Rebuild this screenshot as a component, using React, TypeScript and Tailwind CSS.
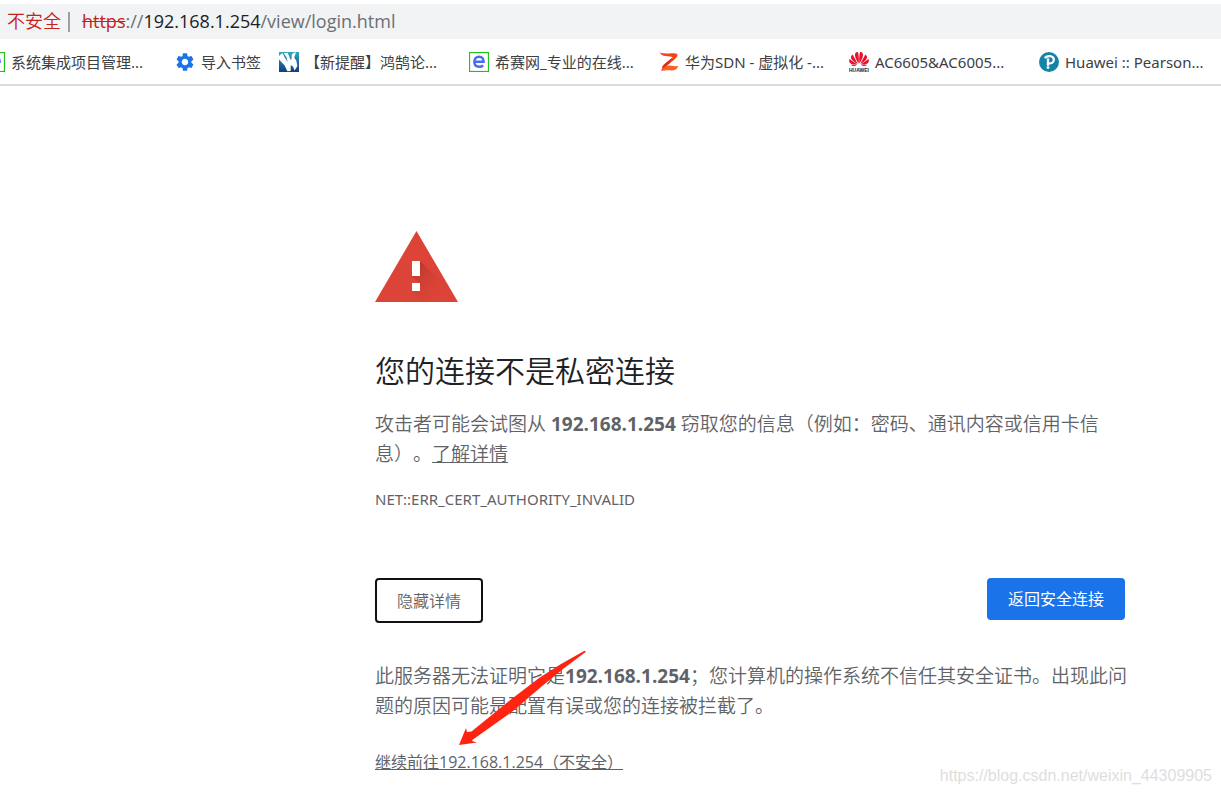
import type { ReactNode } from "react";

interface BookmarkProps {
  label: string;
  icon: ReactNode;
  short?: boolean;
}

function Bookmark({ label, icon, short }: BookmarkProps) {
  return (
    <li className={`shrink-0 ${short ? "w-[104px]" : "w-[190px]"}`}>
      <a href="#" className="flex items-center gap-[6px] text-[15px] leading-5 whitespace-nowrap text-[#3c4043]">
        {icon}
        {label}
      </a>
    </li>
  );
}

function EducityIcon() {
  return (
    <svg viewBox="0 0 20 20" className="size-5 shrink-0" aria-hidden="true">
      <rect x="0.5" y="0.5" width="19" height="19" fill="#fff" stroke="#1fc11f" strokeWidth="1.2" />
      <path d="M5.6 9.7H14.6C14.6 6.4 12.8 4.7 10.1 4.7C7.2 4.7 5.3 6.8 5.3 9.8C5.3 12.9 7.2 14.8 10.2 14.8C12 14.8 13.2 14.3 14.2 13.5" fill="none" stroke="#4a68f0" strokeWidth="2.4" />
    </svg>
  );
}

function GearIcon() {
  return (
    <svg viewBox="2 2 20 20" className="size-5 shrink-0 p-px" aria-hidden="true">
      <path
        fill="#1a73e8"
        d="M19.14 12.94c.04-.3.06-.61.06-.94 0-.32-.02-.64-.07-.94l2.03-1.58c.18-.14.23-.41.12-.61l-1.92-3.32c-.12-.22-.37-.29-.59-.22l-2.39.96c-.5-.38-1.03-.7-1.62-.94l-.36-2.54c-.04-.24-.24-.41-.48-.41h-3.84c-.24 0-.43.17-.47.41l-.36 2.54c-.59.24-1.13.57-1.62.94l-2.39-.96c-.22-.08-.47 0-.59.22L2.74 8.87c-.12.21-.08.47.12.61l2.03 1.58c-.05.3-.09.63-.09.94s.02.64.07.94l-2.03 1.58c-.18.14-.23.41-.12.61l1.92 3.32c.12.22.37.29.59.22l2.39-.96c.5.38 1.03.7 1.62.94l.36 2.54c.05.24.24.41.48.41h3.84c.24 0 .44-.17.47-.41l.36-2.54c.59-.24 1.13-.56 1.62-.94l2.39.96c.22.08.47 0 .59-.22l1.92-3.32c.12-.22.07-.47-.12-.61l-2.01-1.58zM12 15.6c-1.98 0-3.6-1.62-3.6-3.6s1.62-3.6 3.6-3.6 3.6 1.62 3.6 3.6-1.62 3.6-3.6 3.6z"
      />
    </svg>
  );
}

function SwanIcon() {
  return (
    <svg viewBox="0 0 20 20" className="size-5 shrink-0" aria-hidden="true">
      <defs>
        <linearGradient id="swan" x1="0" y1="0" x2="0" y2="1">
          <stop offset="0" stopColor="#35a9bd" />
          <stop offset="0.5" stopColor="#1c6fa0" />
          <stop offset="1" stopColor="#153c7c" />
        </linearGradient>
      </defs>
      <rect width="20" height="20" fill="url(#swan)" />
      <path d="M0 4L2.6 1.4L8.6 .8L12 8.6L11.6 19L8.4 19.2L5.6 13.4L0 7.4Z" fill="#fff" />
      <path d="M11 8.4L12.6 7V3.2C13.2 1.4 14.8 .2 17 .4L15.2 5.6L17.4 9L18.4 14L15.6 18.4L14 14.4L10.8 12.4Z" fill="#fff" />
      <path d="M3.6 .8L5.4 5L8.6 10L7.6 5.4L4.6 1Z" fill="#2a8bac" />
    </svg>
  );
}

function RibbonIcon() {
  return (
    <svg viewBox="0 0 20 20" className="size-5 shrink-0" aria-hidden="true">
      <path d="M.8 .6C4 1.8 9 1.4 13 1.2C17 1 19.2 1.6 18.2 4.2C17 7 12.6 9.4 8 13.4L3.4 16.6C2.6 14.8 4 12.8 6.5 11.2L14 5.2C10 3.8 2.6 5.4 .8 .6Z" fill="#f2431d" />
      <path d="M2.4 17.6C3.4 14 7.6 13.2 12 13.8C15 14.2 18 14.6 19.2 13.8C18.4 17.2 16 18.6 12.5 18.4C9 18.2 5 18.4 2.4 19Z" fill="#f9602a" />
      <path d="M14 5.2L6.5 11.2L4 14.2L3.6 16.4L10.6 11.2Z" fill="#e02a16" />
    </svg>
  );
}

function HuaweiIcon() {
  return (
    <svg viewBox="0 0 20 20" className="size-5 shrink-0" aria-hidden="true">
      <g fill="#e8112d" transform="scale(1 .88)">
        <path d="M9.7 13.2C7.2 9 5.4 4.6 6.2 1.6C6.8.5 7.8.1 9 0C9.8 3.4 10 8.4 9.7 13.2Z" />
        <path d="M10.3 13.2C12.8 9 14.6 4.6 13.8 1.6C13.2.5 12.2.1 11 0C10.2 3.4 10 8.4 10.3 13.2Z" />
        <path d="M8.8 13.4C5 11.6 1.6 8.4 2 5.4C2.2 4.2 3 3.4 3.8 2.8C5 6 7 9.8 8.8 13.4Z" />
        <path d="M11.2 13.4C15 11.6 18.4 8.4 18 5.4C17.8 4.2 17 3.4 16.2 2.8C15 6 13 9.8 11.2 13.4Z" />
        <path d="M8.2 14C4.8 14.6 1.6 14 .5 11.6C0 10.4 0 9 .5 8C2.8 10.2 5.6 12.2 8.2 14Z" />
        <path d="M11.8 14C15.2 14.6 18.4 14 19.5 11.6C20 10.4 20 9 19.5 8C17.2 10.2 14.4 12.2 11.8 14Z" />
        <path d="M8 14.6C6 16.4 3.4 16.4 1.8 14.6Z" />
        <path d="M12 14.6C14 16.4 16.6 16.4 18.2 14.6Z" />
      </g>
      <text x="10" y="20" textAnchor="middle" fontSize="5" fontWeight="700" fontFamily="Liberation Sans, sans-serif" fill="#222">
        HUAWEI
      </text>
    </svg>
  );
}

function PearsonIcon() {
  return (
    <svg viewBox="0 0 20 20" className="size-5 shrink-0" aria-hidden="true">
      <circle cx="10" cy="10" r="10" fill="#1583a6" />
      <path d="M5.6 6C7.4 4.4 9.4 3.9 11.2 4.2C13.6 4.6 15 6 14.8 8.1C14.5 10.6 12.2 11.9 9.4 11.4" fill="none" stroke="#fff" strokeWidth="2.2" />
      <path d="M9 6.4V13.8" stroke="#fff" strokeWidth="2.4" />
      <circle cx="9" cy="15.6" r="1.4" fill="#fff" />
    </svg>
  );
}

const bookmarks: BookmarkProps[] = [
  { label: "系统集成项目管理...", icon: <EducityIcon /> },
  { label: "导入书签", icon: <GearIcon />, short: true },
  { label: "【新提醒】鸿鹄论...", icon: <SwanIcon /> },
  { label: "希赛网_专业的在线...", icon: <EducityIcon /> },
  { label: "华为SDN - 虚拟化 -...", icon: <RibbonIcon /> },
  { label: "AC6605&AC6005...", icon: <HuaweiIcon /> },
  { label: "Huawei :: Pearson...", icon: <PearsonIcon /> },
];

function WarningIcon() {
  return (
    <svg viewBox="0 0 84 72" className="h-[72px] w-[84px]" role="img" aria-label="警告">
      <defs>
        <linearGradient id="shade" gradientUnits="userSpaceOnUse" x1="41" y1="38" x2="66" y2="63">
          <stop offset="0" stopColor="#b5352b" stopOpacity="0.8" />
          <stop offset="1" stopColor="#db4437" stopOpacity="0" />
        </linearGradient>
      </defs>
      <path d="M41.5 1L83 72H0Z" fill="#db4437" />
      <path d="M45 31L79 65L83 72H63L37 46H45Z" fill="url(#shade)" />
      <path d="M45 53L64 72H48L37 61Z" fill="url(#shade)" />
      <path d="M37 31H45V46H37ZM37 53H45V61H37Z" fill="#fff" />
    </svg>
  );
}

export default function App() {
  return (
    <div className="relative min-h-screen overflow-hidden bg-white pt-1 font-['Open_Sans','Noto_Sans_CJK_SC',sans-serif]">
      <header>
        <div className="flex h-[35px] items-center bg-[#f1f3f4] pl-[7px] text-[18px] whitespace-nowrap text-[#6b6f74]">
          <span className="font-[350] text-[#c5221f]">不安全</span>
          <span className="mr-3 ml-[7px] h-5 w-[2px] bg-[#9aa0a6]" />
          <span>
            <span className="text-[#c5221f] line-through">https</span>://
            <span className="text-[#202124]">192.168.1.254</span>/view/login.html
          </span>
        </div>
        <nav className="border-b-2 border-[#dadce0] font-['Noto_Sans','Noto_Sans_CJK_SC',sans-serif]">
          <ul className="-ml-[15px] flex h-[45px] items-center">
            {bookmarks.map((bookmark) => (
              <Bookmark key={bookmark.label} {...bookmark} />
            ))}
          </ul>
        </nav>
      </header>

      <main className="pt-[144px] pr-24 pl-[375px] text-[19px] leading-[30px] font-[350] text-[#5f6368]">
        <WarningIcon />
        <h1 className="mt-[49px] text-[30px] leading-10 text-[#202124]">您的连接不是私密连接</h1>
        <p className="mt-[18px] whitespace-nowrap [text-spacing-trim:space-all]">
          攻击者可能会试图从 <strong className="font-bold">192.168.1.254</strong> 窃取您的信息（例如：密码、通讯内容或信用卡信
          <br />
          息）。
          <a href="#" className="underline">了解详情</a>
        </p>
        <p className="mt-[18px] font-['Noto_Sans',sans-serif] text-[15px] leading-6 font-normal">NET::ERR_CERT_AUTHORITY_INVALID</p>

        <div className="mt-[67px] flex items-start justify-between">
          <button className="h-[45px] rounded border-2 border-[#111] px-5 text-[16px]">隐藏详情</button>
          <button className="h-[42px] rounded bg-[#1a73e8] px-[21px] text-[16px] font-normal text-white">返回安全连接</button>
        </div>

        <div className="relative mt-[38px]">
          <p className="whitespace-nowrap">
            此服务器无法证明它是<strong className="font-bold">192.168.1.254</strong>；您计算机的操作系统不信任其安全证书。出现此问
            <br />
            题的原因可能是配置有误或您的连接被拦截了。
          </p>
          <p className="mt-[26px] text-[16px] font-normal">
            <a href="#" className="underline">继续前往192.168.1.254（不安全）</a>
          </p>
          <svg viewBox="0 0 128 96" className="pointer-events-none absolute -top-[11px] left-[84px] h-24 w-32" aria-hidden="true">
            <path d="M0 95L7 78L8 82L12.5 81.5L50 51L80 28L102 14L125.5 .8L127 1.8L104 19L82 37L54 61L14 89.5L13 91L18 92.5Z" fill="#ff2412" />
          </svg>
        </div>
      </main>

      <p className="absolute right-[9px] bottom-2 font-['Liberation_Sans',sans-serif] text-[16px] leading-5 text-[#dedede]">
        https://blog.csdn.net/weixin_44309905
      </p>
    </div>
  );
}
